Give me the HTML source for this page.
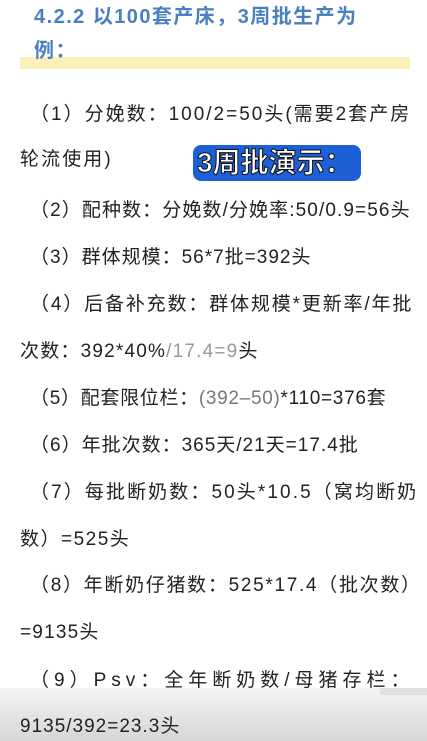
<html><head><style>
body{margin:0;width:427px;height:741px;overflow:hidden;background:#fff;position:relative;font-family:"Liberation Sans","Noto Sans CJK SC",sans-serif;}
.l{position:absolute;left:0;white-space:nowrap;font-size:19px;color:#222;line-height:24px;letter-spacing:2.1px}
.t{position:absolute;left:34px;font-size:20px;font-weight:bold;color:#4a7fc0;white-space:nowrap;line-height:26px;letter-spacing:1.45px}
</style></head><body>
<div style="position:absolute;left:20px;top:57px;width:390px;height:12px;background:#fbf1b8"></div>
<div class="t" style="top:4px">4.2.2 以100套产床，3周批生产为</div>
<div class="t" style="top:38px">例：</div>
<div class="l" style="top:103px;left:30px;letter-spacing:2px">（1）分娩数：100/2=50头(需要2套产房</div>
<div class="l" style="top:148px;left:20px">轮流使用)</div>
<div style="position:absolute;left:193px;top:145px;width:168px;height:36px;background:#1d5fd6;border-radius:8px"></div>
<div style="position:absolute;left:197px;top:145px;font-size:28px;font-weight:bold;color:#fff;line-height:36px;-webkit-text-stroke:1px #111">3周批演示：</div>
<div class="l" style="top:199px;left:30px;letter-spacing:1.1px">（2）配种数：分娩数/分娩率:50/0.9=56头</div>
<div class="l" style="top:246px;left:30px;letter-spacing:1px">（3）群体规模：56*7批=392头</div>
<div class="l" style="top:293px;left:30px;letter-spacing:1.85px">（4）后备补充数：群体规模*更新率/年批</div>
<div class="l" style="top:340px;left:20px;letter-spacing:1.2px">次数：392*40%<span style="color:#999">/17.4=9</span>头</div>
<div class="l" style="top:387px;left:30px;letter-spacing:0.7px">（5）配套限位栏：<span style="color:#777">(392–50)</span>*110=376套</div>
<div class="l" style="top:434px;left:30px;letter-spacing:1px">（6）年批次数：365天/21天=17.4批</div>
<div class="l" style="top:481px;left:30px">（7）每批断奶数：50头*10.5（窝均断奶</div>
<div class="l" style="top:528px;left:20px;letter-spacing:1.5px">数）=525头</div>
<div class="l" style="top:574px;left:30px;letter-spacing:1.7px">（8）年断奶仔猪数：525*17.4（批次数）</div>
<div class="l" style="top:621px;left:20px;letter-spacing:1.2px">=9135头</div>
<div class="l" style="top:669px;left:30px;letter-spacing:5px">（9）Psv：全年断奶数/母猪存栏：</div>
<div style="position:absolute;left:0;top:688px;width:427px;height:53px;background:linear-gradient(#f4f4f4,#d6d6d6)"></div>
<div style="position:absolute;left:380px;top:688px;width:47px;height:7px;background:#e0e0e0"></div>
<div class="l" style="top:715px;left:20px;letter-spacing:1px">9135/392=23.3头</div>
</body></html>
